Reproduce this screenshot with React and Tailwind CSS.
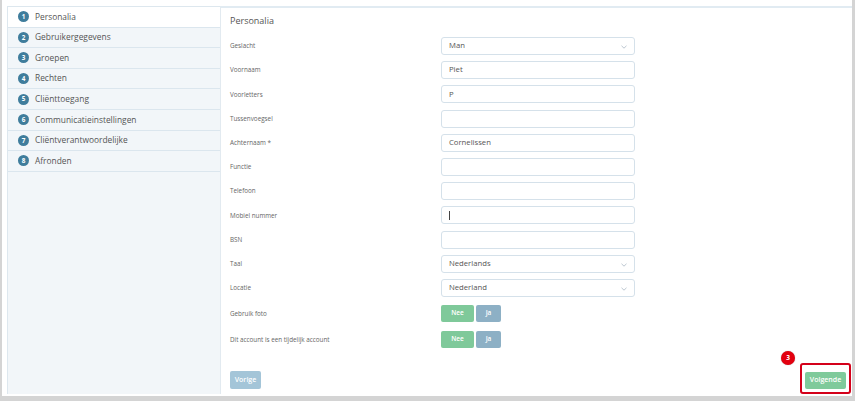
import React from "react";

const steps = [
  "Personalia",
  "Gebruikergegevens",
  "Groepen",
  "Rechten",
  "Cliënttoegang",
  "Communicatieinstellingen",
  "Cliëntverantwoordelijke",
  "Afronden",
];

function Chevron() {
  return (
    <svg width="6" height="4" viewBox="0 0 6 4" className="absolute right-[7px] top-[7px]">
      <path d="M0.5 0.8 L3 3.2 L5.5 0.8" fill="none" stroke="#a9b8c4" strokeWidth="0.8" />
    </svg>
  );
}

function Field({ value, select, cursor }) {
  return (
    <div className="relative h-[18px] w-[194px] rounded-[3px] border border-[#d5e1ea] bg-white flex items-center pl-[7px] text-[7.7px] text-[#555]">
      {value}
      {cursor && <span className="block w-[1px] h-[9px] bg-[#444]" />}
      {select && <Chevron />}
    </div>
  );
}

function Toggle() {
  return (
    <div className="flex gap-[2px] h-[17px]">
      <div className="w-[33px] rounded-[2px] bg-[#7fc99a] text-white text-[6.5px] font-semibold flex items-center justify-center">Nee</div>
      <div className="w-[25px] rounded-[2px] bg-[#8db0c5] text-white text-[6.5px] font-semibold flex items-center justify-center">Ja</div>
    </div>
  );
}

const rows = [
  ["Geslacht", { value: "Man", select: true }],
  ["Voornaam", { value: "Piet" }],
  ["Voorletters", { value: "P" }],
  ["Tussenvoegsel", {}],
  ["Achternaam *", { value: "Cornelissen" }],
  ["Functie", {}],
  ["Telefoon", {}],
  ["Mobiel nummer", { cursor: true }],
  ["BSN", {}],
  ["Taal", { value: "Nederlands", select: true }],
  ["Locatie", { value: "Nederland", select: true }],
];

export default function App() {
  return (
    <div className="w-[855px] h-[401px] bg-[#d4d4d4] pl-[2px] pr-[3px] pb-[5px] font-['Open_Sans',sans-serif]">
      <div className="h-full bg-white pt-[6px] pl-[5px] pb-[2px] flex">
        <aside className="w-[213px] shrink-0 bg-[#f2f6f9] border-l border-t border-[#dde7ee] flex flex-col">
          {steps.map((s, i) => (
            <div
              key={s}
              className={`h-[20.6px] shrink-0 border-b border-[#dbe6ee] flex items-center pl-[10px] gap-[6px] ${i === 0 ? "bg-white" : ""}`}
            >
              <span className="w-[11px] h-[11px] rounded-full bg-[#3f7d9c] text-white text-[6.3px] font-bold flex items-center justify-center">
                {i + 1}
              </span>
              <span className="text-[8.4px] text-[#555] leading-none">{s}</span>
            </div>
          ))}
        </aside>
        <main className="flex-1 border-l border-[#e2eaf0] border-t-2 border-t-[#e1ebf2] flex flex-col pl-[9px] pr-[6px] pt-[7px] pb-[5px]">
          <h1 className="text-[9px] leading-[12px] text-[#555]">Personalia</h1>
          <div className="mt-[10px] flex flex-col gap-[6.2px]">
            {rows.map(([label, f]) => (
              <div key={label} className="flex items-center h-[18px]">
                <div className="w-[211px] text-[6.3px] text-[#666]">{label}</div>
                <Field {...f} />
              </div>
            ))}
            <div className="flex items-center h-[17px] mt-[1.8px]">
              <div className="w-[211px] text-[6.3px] text-[#666]">Gebruik foto</div>
              <Toggle />
            </div>
            <div className="flex items-center h-[17px] mt-[2.8px]">
              <div className="w-[211px] text-[6.3px] text-[#666]">Dit account is een tijdelijk account</div>
              <Toggle />
            </div>
          </div>
          <div className="flex-1" />
          <div className="flex justify-between items-end">
            <div className="h-[18px] w-[31px] rounded-[2px] bg-[#a4c5d8] text-white text-[7px] font-semibold flex items-center justify-center">
              Vorige
            </div>
            <div className="relative h-[17px] w-[41px] rounded-[2px] bg-[#7fca9b] text-white text-[7px] font-semibold flex items-center justify-center">
              Volgende
              <div className="absolute left-[-5px] right-[-5px] top-[-9px] bottom-[-5px] rounded-[3px] border-2 border-[#d4001a]" />
              <div className="absolute left-[-24px] top-[-21px] w-[14px] h-[14px] rounded-full bg-[#e3000f] text-white text-[6.5px] font-bold flex items-center justify-center shadow-[0_0_1px_rgba(0,0,0,0.4)]">
                3
              </div>
            </div>
          </div>
        </main>
      </div>
    </div>
  );
}
